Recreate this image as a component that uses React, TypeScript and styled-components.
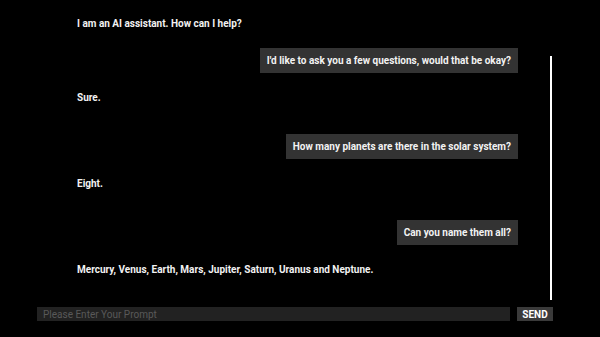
import React, { useState } from 'react';
import styled, { createGlobalStyle } from 'styled-components';

const GlobalStyle = createGlobalStyle`
  html, body {
    margin: 0;
    padding: 0;
    background: #000000;
  }
  body {
    font-family: 'Roboto', 'Liberation Sans', sans-serif;
    color: #f0f0f0;
  }
`;

const Page = styled.div`
  width: 600px;
  height: 337px;
  box-sizing: border-box;
  padding: 0 47px 0 37px;
  display: flex;
  flex-direction: column;
  overflow: hidden;
`;

const ChatArea = styled.div`
  display: flex;
  height: 300px;
`;

const MessageList = styled.div`
  flex: 1;
  display: flex;
  flex-direction: column;
  gap: 12px;
  padding: 11px 32px 0 40px;
`;

const Row = styled.div<{ $user?: boolean; $spaced?: boolean }>`
  display: flex;
  justify-content: ${p => (p.$user ? 'flex-end' : 'flex-start')};
  margin-top: ${p => (p.$spaced ? '12px' : '0')};
`;

const Text = styled.div<{ $user?: boolean }>`
  height: 25px;
  display: flex;
  align-items: center;
  padding: 0 ${p => (p.$user ? '7px' : '0')};
  background: ${p => (p.$user ? '#333333' : 'transparent')};
  font-size: 10px;
  font-weight: 700;
  color: #f2f2f2;
  white-space: nowrap;
`;

const ScrollTrack = styled.div`
  width: 2px;
  margin-right: 1px;
  display: flex;
  flex-direction: column;
  justify-content: flex-end;
`;

const ScrollThumb = styled.div`
  height: 244px;
  background: #ffffff;
`;

const InputRow = styled.form`
  display: flex;
  gap: 7px;
  margin-top: 7px;
  height: 14px;
`;

const PromptInput = styled.input`
  flex: 1;
  min-width: 0;
  height: 14px;
  box-sizing: border-box;
  border: none;
  outline: none;
  background: #222222;
  color: #dddddd;
  padding: 0 6px;
  font-family: 'Roboto', 'Liberation Sans', sans-serif;
  font-size: 10px;

  &::placeholder {
    color: #595959;
  }
`;

const SendButton = styled.button`
  width: 36px;
  height: 14px;
  padding: 0;
  border: none;
  background: #3a3a3a;
  color: #ffffff;
  font-family: 'Roboto', 'Liberation Sans', sans-serif;
  font-size: 10px;
  font-weight: 700;
  cursor: pointer;
`;

interface Message {
  text: string;
  isUser: boolean;
}

const initialMessages: Message[] = [
  { text: 'I am an AI assistant. How can I help?', isUser: false },
  { text: "I'd like to ask you a few questions, would that be okay?", isUser: true },
  { text: 'Sure.', isUser: false },
  { text: 'How many planets are there in the solar system?', isUser: true },
  { text: 'Eight.', isUser: false },
  { text: 'Can you name them all?', isUser: true },
  { text: 'Mercury, Venus, Earth, Mars, Jupiter, Saturn, Uranus and Neptune.', isUser: false },
];

const App: React.FC = () => {
  const [messages] = useState<Message[]>(initialMessages);
  const [prompt, setPrompt] = useState('');

  return (
    <>
      <GlobalStyle />
      <Page>
        <ChatArea>
          <MessageList>
            {messages.map((m, i) => (
              <Row key={i} $user={m.isUser} $spaced={m.isUser && i > 1}>
                <Text $user={m.isUser}>{m.text}</Text>
              </Row>
            ))}
          </MessageList>
          <ScrollTrack>
            <ScrollThumb />
          </ScrollTrack>
        </ChatArea>
        <InputRow onSubmit={e => e.preventDefault()}>
          <PromptInput
            value={prompt}
            onChange={e => setPrompt(e.target.value)}
            placeholder="Please Enter Your Prompt"
          />
          <SendButton type="submit">SEND</SendButton>
        </InputRow>
      </Page>
    </>
  );
};

export default App;
